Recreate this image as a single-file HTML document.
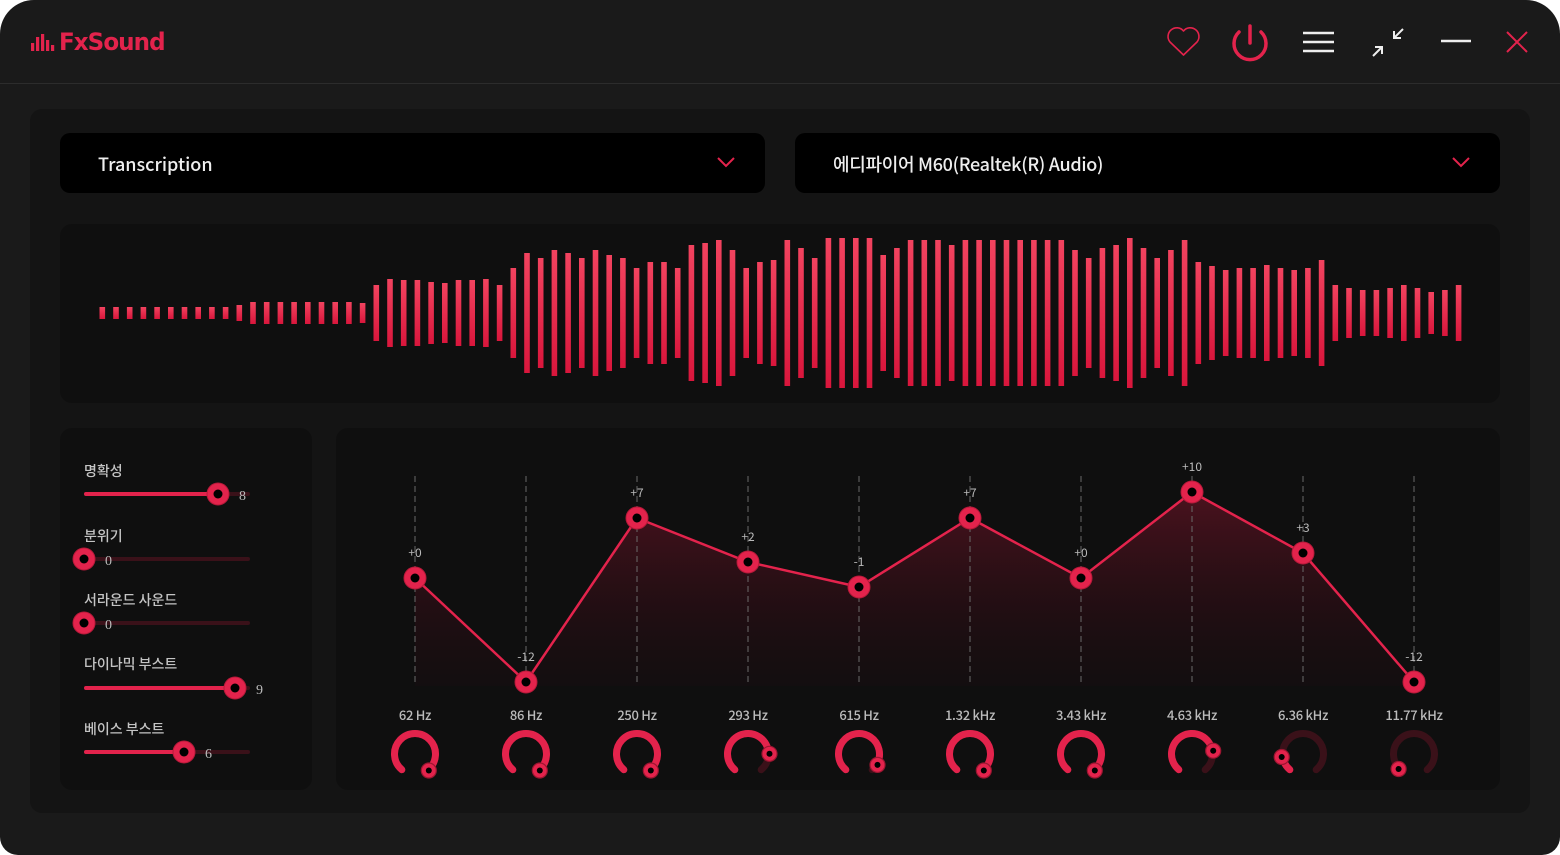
<!DOCTYPE html>
<html><head><meta charset="utf-8">
<style>
*{margin:0;padding:0;box-sizing:border-box}
body{width:1560px;height:855px;background:#fff;overflow:hidden;font-family:"Liberation Sans","Noto Sans CJK KR",sans-serif}
#win{position:absolute;left:0;top:0;width:1560px;height:855px;background:#1a1a1a;border-radius:34px 34px 18px 18px;overflow:hidden}
#hdr{position:absolute;left:0;top:0;width:1560px;height:84px;border-bottom:1px solid #2c2c2c}
#logo{position:absolute;left:59px;top:28px;color:#e3234c;font-size:24px;font-weight:bold;font-family:"DejaVu Sans","Liberation Sans",sans-serif;letter-spacing:-1px;transform:scaleX(0.96);transform-origin:left}
#main{position:absolute;left:30px;top:109px;width:1500px;height:704px;background:#141414;border-radius:12px}
.dd{position:absolute;top:133px;height:60px;background:#000;border-radius:10px;color:#eee;font-size:18px;font-weight:500;font-family:"Noto Sans CJK KR",sans-serif;line-height:62px;padding-left:38px}
.panel{position:absolute;background:#0f0f0f;border-radius:12px}
.lbl{position:absolute;color:#c4c4c4;font-size:14px;font-weight:500;font-family:"Noto Sans CJK KR",sans-serif}
</style></head><body>
<div id="win">
<div id="hdr">
<svg style="position:absolute;left:31px;top:34px" width="24" height="18"><g fill="#e3234c"><rect x="0" y="9" width="3.2" height="8"/><rect x="5" y="3" width="3.2" height="14"/><rect x="10" y="0" width="3.2" height="17"/><rect x="15" y="6" width="3.2" height="11"/><rect x="20" y="11" width="3.2" height="6"/></g></svg>
<div id="logo">FxSound</div>
<svg style="position:absolute;left:1160px;top:15px" width="390" height="55" fill="none">
<path d="M23.5 40 L10 27 A7.5 7.5 0 0 1 23.5 16 A7.5 7.5 0 0 1 37 27 Z" stroke="#e3234c" stroke-width="1.6" stroke-linejoin="round"/>
<path d="M79 17 A16 16 0 1 0 101 17" stroke="#e3234c" stroke-width="3.5" stroke-linecap="round"/>
<line x1="90" y1="11" x2="90" y2="28" stroke="#e3234c" stroke-width="3.5" stroke-linecap="round"/>
<g stroke="#eee" stroke-width="2.5"><line x1="143" y1="18" x2="174" y2="18"/><line x1="143" y1="27" x2="174" y2="27"/><line x1="143" y1="36" x2="174" y2="36"/></g>
<g stroke="#eee" stroke-width="2"><path d="M213 41 L222 32 M215 32 L222 32 L222 39"/><path d="M243 14 L234 23 M234 16 L234 23 L241 23"/></g>
<line x1="281" y1="26" x2="311" y2="26" stroke="#eee" stroke-width="2.5"/>
<path d="M347 17 L367 37 M367 17 L347 37" stroke="#e3234c" stroke-width="2"/>
</svg>
</div>
<div id="main"></div>
<div class="dd" style="left:60px;width:705px">Transcription<svg style="position:absolute;right:30px;top:24px" width="18" height="11"><path d="M1 1 L9 9 L17 1" stroke="#e3234c" stroke-width="2" fill="none"/></svg></div>
<div class="dd" style="left:795px;width:705px;letter-spacing:-0.3px">에디파이어 M60(Realtek(R) Audio)<svg style="position:absolute;right:30px;top:24px" width="18" height="11"><path d="M1 1 L9 9 L17 1" stroke="#e3234c" stroke-width="2" fill="none"/></svg></div>
<div class="panel" style="left:60px;top:224px;width:1440px;height:179px"></div>
<svg id="wave" style="position:absolute;left:0;top:0" width="1560" height="420">
<defs><linearGradient id="bg" x1="0" y1="0" x2="0" y2="1"><stop offset="0" stop-color="#f2435f"/><stop offset="1" stop-color="#d9163c"/></linearGradient></defs>
<g id="bars" fill="url(#bg)"></g></svg>
<div class="panel" style="left:60px;top:428px;width:252px;height:362px"></div>
<div class="panel" style="left:336px;top:428px;width:1164px;height:362px"></div>
<div class="lbl" style="left:84px;top:461px">명확성</div>
<div class="lbl" style="left:84px;top:526px">분위기</div>
<div class="lbl" style="left:84px;top:590px">서라운드 사운드</div>
<div class="lbl" style="left:84px;top:654px">다이나믹 부스트</div>
<div class="lbl" style="left:84px;top:719px">베이스 부스트</div>
<svg id="sl" style="position:absolute;left:0;top:0" width="330" height="800"></svg>
<svg id="eq" style="position:absolute;left:0;top:0" width="1560" height="800"></svg>
</div>
<script>
var tops=[307,307,307,307,307,307,307,307,307,307,305,302,302,302,302,302,302,302,302,303,285,279,280,280,282,283,280,280,279,285,268,253,258,250,253,258,250,255,258,268,262,262,268,245,243,240,250,268,262,260,240,248,258,238,238,238,238,255,248,240,240,240,245,240,240,240,240,240,240,240,240,250,258,248,245,238,248,258,250,240,262,266,270,268,268,265,268,270,268,260,285,288,290,290,288,285,288,292,290,285];
var g=document.getElementById('bars'),s='';
for(var i=0;i<tops.length;i++){var x=100+i*13.7,h=(313-tops[i])*2;s+='<rect x="'+(x-0.5).toFixed(1)+'" y="'+tops[i]+'" width="5.6" height="'+h+'"/>';}
g.innerHTML=s;
var sl=[[494,218,'8'],[559,84,'0'],[623,84,'0'],[688,235,'9'],[752,184,'6']],o='';
sl.forEach(function(a){o+='<rect x="84" y="'+(a[0]-2)+'" width="166" height="4" rx="2" fill="#3a1119"/><rect x="84" y="'+(a[0]-2)+'" width="'+(a[1]-84)+'" height="4" rx="2" fill="#e3234c"/><circle cx="'+a[1]+'" cy="'+a[0]+'" r="11" fill="#e3234c" stroke="#b81a3a" stroke-width="1"/><circle cx="'+a[1]+'" cy="'+a[0]+'" r="4.5" fill="#000"/><text x="'+(a[1]+21)+'" y="'+(a[0]+6)+'" fill="#bbb" font-size="14" font-family="Liberation Serif,serif">'+a[2]+'</text>';});
document.getElementById('sl').innerHTML=o;
var xs=[415,526,637,748,859,970,1081,1192,1303,1414],ys=[578,682,518,562,587,518,578,492,553,682];
var vals=['+0','-12','+7','+2','-1','+7','+0','+10','+3','-12'];
var fr=['62 Hz','86 Hz','250 Hz','293 Hz','615 Hz','1.32 kHz','3.43 kHz','4.63 kHz','6.36 kHz','11.77 kHz'];
var kv=[1,1,1,0.82,0.93,1,1,0.79,0.15,0.02];
var e='<defs><linearGradient id="fillg" x1="0" y1="0" x2="0" y2="1"><stop offset="0" stop-color="#5a1322" stop-opacity="0.8"/><stop offset="1" stop-color="#2a0a12" stop-opacity="0.15"/></linearGradient></defs>';
var pts=xs.map(function(x,i){return x+','+ys[i]}).join(' ');
e+='<polygon points="415,686 '+pts+' 1414,686" fill="url(#fillg)"/>';
xs.forEach(function(x){e+='<line x1="'+x+'" y1="476" x2="'+x+'" y2="686" stroke="#6a6a6a" stroke-width="1" stroke-dasharray="6,4"/>';});
e+='<polyline points="'+pts+'" fill="none" stroke="#e3234c" stroke-width="2.5"/>';
function pt(cx,cy,r,a){a=a*Math.PI/180;return [cx+Math.sin(a)*r,cy-Math.cos(a)*r];}
function arc(cx,cy,r,a1,a2){var p=pt(cx,cy,r,a1),q=pt(cx,cy,r,a2);return 'M'+p[0].toFixed(2)+' '+p[1].toFixed(2)+' A'+r+' '+r+' 0 '+((a2-a1)>180?1:0)+' 1 '+q[0].toFixed(2)+' '+q[1].toFixed(2);}
xs.forEach(function(x,i){var y=ys[i];
e+='<circle cx="'+x+'" cy="'+y+'" r="11" fill="#e3234c" stroke="#b81a3a"/><circle cx="'+x+'" cy="'+y+'" r="4.5" fill="#000"/>';
e+='<text x="'+x+'" y="'+(y-21)+'" fill="#bbb" font-size="12" text-anchor="middle" font-family="Noto Sans CJK KR,sans-serif">'+vals[i]+'</text>';
e+='<text x="'+x+'" y="720" fill="#bbb" font-size="13" font-weight="500" text-anchor="middle" font-family="Noto Sans CJK KR,sans-serif" letter-spacing="-0.3">'+fr[i]+'</text>';
var cx=x,cy=754,r=20.5,a1=220,a2=500,av=a1+(a2-a1)*kv[i];
e+='<path d="'+arc(cx,cy,r,a1,a2)+'" stroke="#3a1119" stroke-width="7" fill="none" stroke-linecap="round"/>';
if(av-a1>1)e+='<path d="'+arc(cx,cy,r,a1,av)+'" stroke="#e3234c" stroke-width="7" fill="none" stroke-linecap="round"/>';
var d=pt(cx,cy,r+1,av);
e+='<circle cx="'+d[0].toFixed(1)+'" cy="'+d[1].toFixed(1)+'" r="7.5" fill="#e3234c" stroke="#9c1631" stroke-width="1.2"/><circle cx="'+d[0].toFixed(1)+'" cy="'+d[1].toFixed(1)+'" r="3" fill="#000"/>';
});
document.getElementById('eq').innerHTML=e;
</script>
</body></html>
